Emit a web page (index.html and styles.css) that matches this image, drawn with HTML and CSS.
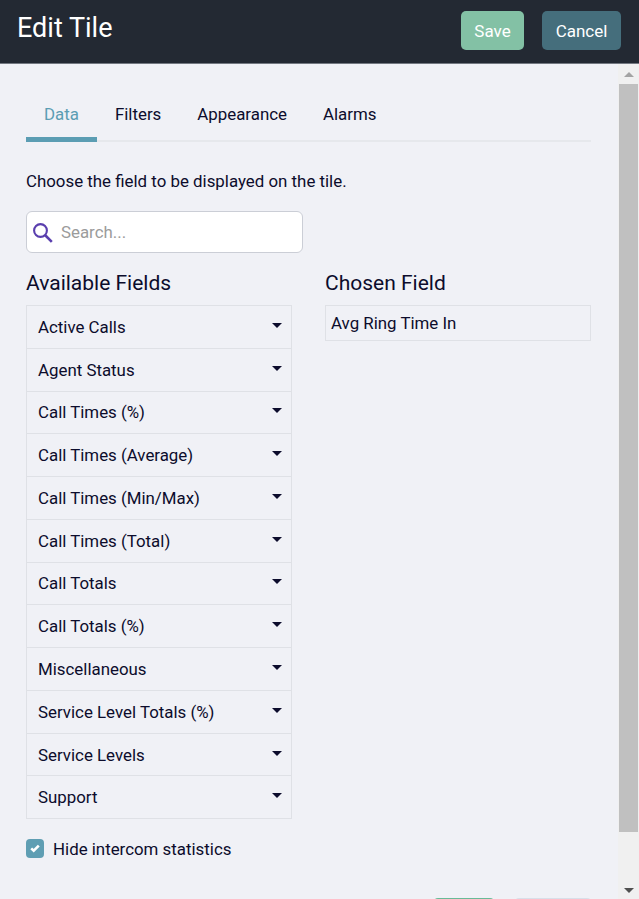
FILE: index.html
```html
<!DOCTYPE html>
<html lang="en">
<head>
    <meta charset="UTF-8">
    <meta name="viewport" content="width=device-width, initial-scale=1.0">
    <title>Edit Tile</title>
    <link rel="stylesheet" href="styles.css">
</head>
<body>
    <header class="header">
        <h1 class="title">Edit Tile</h1>
        <button class="btn btn-save">Save</button>
        <button class="btn btn-cancel">Cancel</button>
    </header>
    <div class="main">
        <div class="content">
            <nav class="tabs">
                <a class="tab active">Data</a>
                <a class="tab">Filters</a>
                <a class="tab">Appearance</a>
                <a class="tab">Alarms</a>
            </nav>
            <p class="intro">Choose the field to be displayed on the tile.</p>
            <div class="search">
                <svg class="search-icon" width="20" height="20" viewBox="0 0 20 20">
                    <circle cx="7.5" cy="7.5" r="6.4" fill="none" stroke="#5a3fae" stroke-width="2.1"/>
                    <path d="M12 12L18.8 18.8" stroke="#5a3fae" stroke-width="2.6"/>
                </svg>
                <input class="search-input" type="text" placeholder="Search...">
            </div>
            <div class="columns">
                <section class="column">
                    <h2 class="heading">Available Fields</h2>
                    <ul class="fields">
                        <li class="field">Active Calls</li>
                        <li class="field">Agent Status</li>
                        <li class="field">Call Times (%)</li>
                        <li class="field">Call Times (Average)</li>
                        <li class="field">Call Times (Min/Max)</li>
                        <li class="field">Call Times (Total)</li>
                        <li class="field">Call Totals</li>
                        <li class="field">Call Totals (%)</li>
                        <li class="field">Miscellaneous</li>
                        <li class="field">Service Level Totals (%)</li>
                        <li class="field">Service Levels</li>
                        <li class="field">Support</li>
                    </ul>
                </section>
                <section class="column">
                    <h2 class="heading">Chosen Field</h2>
                    <div class="chosen">Avg Ring Time In</div>
                </section>
            </div>
            <label class="check">
                <span class="box">
                    <svg width="10" height="9" viewBox="0 0 10 9">
                        <path d="M1.2 4.4L3.7 6.7L8.8 1.6" fill="none" stroke="#fff" stroke-width="2.6"/>
                    </svg>
                </span>
                <span>Hide intercom statistics</span>
            </label>
            <div class="footer">
                <div class="footer-save"></div>
                <div class="footer-cancel"></div>
            </div>
        </div>
        <div class="scrollbar">
            <div class="arrow-up"></div>
            <div class="thumb"></div>
            <div class="arrow-down"></div>
        </div>
    </div>
</body>
</html>
```
FILE: styles.css
```css
* {
    box-sizing: border-box;
}
body {
    margin: 0;
    height: 899px;
    overflow: hidden;
    display: flex;
    flex-direction: column;
    font-family: Roboto, "Liberation Sans", sans-serif;
    font-size: 16.87px;
    line-height: 20px;
    color: #0c0c2c;
    background-color: #f0f1f6;
}
.header {
    flex: none;
    display: flex;
    align-items: flex-start;
    height: 64px;
    padding: 11px 18px 0 17px;
    background-color: #232933;
    border-bottom: 1px solid #737881;
}
.title {
    flex: 1;
    margin: 0;
    font-size: 27px;
    font-weight: 400;
    line-height: 34px;
    color: #fff;
}
.btn {
    height: 39px;
    padding: 0;
    border: none;
    border-radius: 5px;
    font-family: inherit;
    font-size: 17px;
    color: #fff;
}
.btn-save {
    width: 63px;
    margin-right: 18px;
    background-color: #83c1a5;
}
.btn-cancel {
    width: 79px;
    background-color: #456e7c;
}
.main {
    flex: 1;
    min-height: 0;
    display: flex;
}
.content {
    flex: 1;
    height: 835px;
    padding: 27px 27px 0 26px;
    overflow: hidden;
}
.tabs {
    display: flex;
    height: 51px;
    box-shadow: inset 0 -2px #e6e8ec;
}
.tab {
    padding: 13px 18px 0;
    height: 51px;
}
.tab.active {
    color: #5b9db3;
    border-bottom: 5px solid #5b9db3;
}
.intro {
    margin: 29px 0 20px;
}
.search {
    display: flex;
    align-items: center;
    width: 277px;
    height: 42px;
    padding-left: 6px;
    background-color: #fff;
    border: 1px solid #cbced6;
    border-radius: 6px;
}
.search-icon {
    margin-top: 1px;
}
.search-input {
    width: 220px;
    margin-left: 8px;
    padding: 0;
    border: none;
    outline: none;
    font: inherit;
    background: none;
}
.search-input::placeholder {
    color: #9b9b9b;
}
.columns {
    display: flex;
    gap: 33px;
    margin-top: 17px;
}
.column {
    width: 266px;
}
.heading {
    margin: 0 0 9px;
    font-size: 21px;
    font-weight: 400;
    line-height: 26px;
}
.fields {
    margin: 0;
    padding: 0;
    list-style: none;
    border: 1px solid #dfe1e6;
}
.field {
    display: flex;
    justify-content: space-between;
    align-items: center;
    height: 42.77px;
    padding: 0 9px 0 11px;
    border-bottom: 1px solid #dfe1e6;
}
.field:last-child {
    height: 41.5px;
    border-bottom: none;
}
/* dropdown caret */
.field::after {
    content: "";
    margin-bottom: 3px;
    border: 5px solid transparent;
    border-top-color: #0c0c2c;
    border-bottom: none;
}
.chosen {
    height: 36.4px;
    padding: 7px 5px;
    border: 1px solid #dfe1e6;
}
.check {
    display: flex;
    margin-top: 20px;
}
.box {
    display: flex;
    justify-content: center;
    align-items: center;
    width: 18px;
    height: 19px;
    margin-right: 9px;
    border-radius: 4px;
    background-color: #5f9eb3;
}
.footer {
    display: flex;
    justify-content: flex-end;
    gap: 21px;
    margin-top: 39px;
}
.footer-save {
    width: 60px;
    height: 38px;
    border-radius: 4px;
    background-color: #69bb98;
}
.footer-cancel {
    width: 76px;
    height: 38px;
    border-radius: 4px;
    background-color: #d8dfe9;
}
.scrollbar {
    display: flex;
    flex-direction: column;
    align-items: center;
    width: 21px;
    padding: 8px 0 6px;
    background-color: #f0f0f0;
}
.arrow-up {
    border: 5px solid transparent;
    border-bottom-color: #a3a3a3;
    border-top: none;
}
.thumb {
    width: 19px;
    height: 748px;
    margin: 7px 0 auto;
    background-color: #c0c0c0;
}
.arrow-down {
    border: 5px solid transparent;
    border-top-color: #505050;
    border-bottom: none;
}
```
